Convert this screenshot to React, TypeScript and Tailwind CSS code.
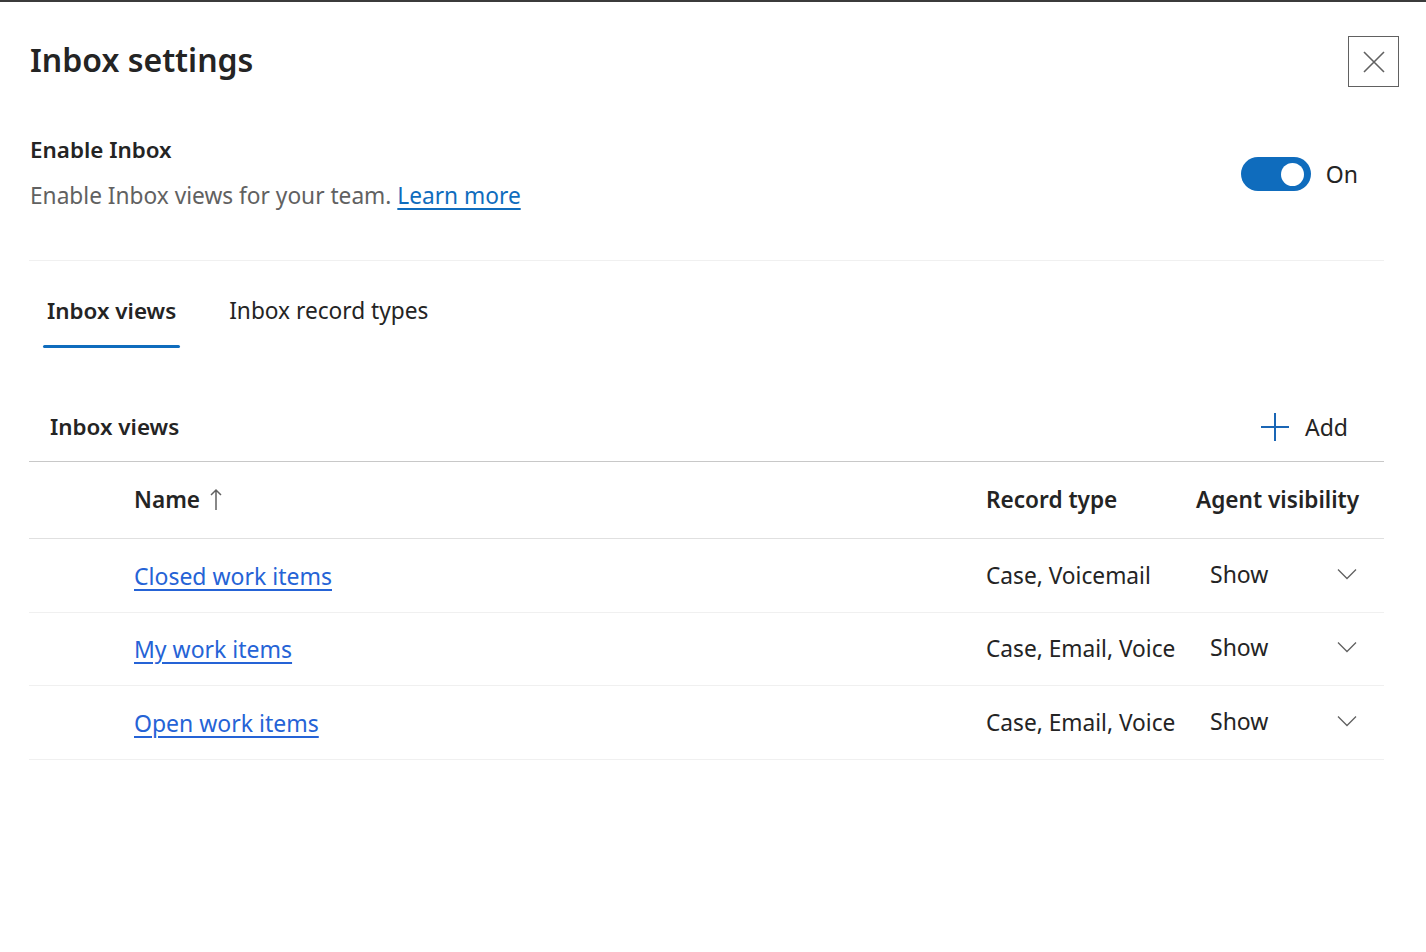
import React from "react";

const font = { fontFamily: '"Segoe UI", "Noto Sans", "Open Sans", sans-serif' };

function Chevron() {
  return (
    <svg width="20" height="12" viewBox="0 0 20 12" fill="none">
      <path d="M1 1.5 L10 10.5 L19 1.5" stroke="#616161" strokeWidth="1.3" />
    </svg>
  );
}

const rows = [
  { name: "Closed work items", type: "Case, Voicemail", h: "h-[74px]" },
  { name: "My work items", type: "Case, Email, Voice", h: "h-[73px]" },
  { name: "Open work items", type: "Case, Email, Voice", h: "h-[74px]" },
];

export default function App() {
  return (
    <div
      className="w-[1426px] h-[952px] bg-white border-t-2 border-[#3b3b3b] text-[#242424] overflow-hidden"
      style={font}
    >
      <div className="pl-[29px] pr-[42px]">
        {/* Header */}
        <div className="flex justify-between items-start pt-[34px] mr-[-15px]">
          <h1 className="text-[32px] leading-[40px] font-semibold mt-[4px] ml-[1px]">Inbox settings</h1>
          <button className="w-[51px] h-[51px] border border-[#616161] flex items-center justify-center">
            <svg width="22" height="22" viewBox="0 0 22 22" fill="none">
              <path d="M1 1 L21 21 M21 1 L1 21" stroke="#616161" strokeWidth="1.6" />
            </svg>
          </button>
        </div>

        {/* Enable section */}
        <div className="flex items-center justify-between mt-[47px] pr-[26px]">
          <div className="ml-[1px]">
            <div className="text-[22.4px] leading-[32px] font-semibold">Enable Inbox</div>
            <div className="text-[22.7px] leading-[32px] mt-[14px] text-[#616161]">
              Enable Inbox views for your team.{" "}
              <a href="#" className="text-[#0f6cbd] underline underline-offset-[4px]">
                Learn more
              </a>
            </div>
          </div>
          <div className="flex items-center gap-[15px] mt-[2px]">
            <div className="w-[70px] h-[34px] rounded-full bg-[#0f6cbd] flex items-center justify-end pr-[7px]">
              <div className="w-[23px] h-[23px] rounded-full bg-white" />
            </div>
            <span className="text-[23px] leading-[32px]">On</span>
          </div>
        </div>

        <div className="mt-[48px] h-px bg-[#f0f0f0]" />

        {/* Tabs */}
        <div className="flex pt-[34px] pl-[14px] gap-[45px]">
          <div className="flex flex-col">
            <span className="px-[4px] text-[22.4px] leading-[32px] font-semibold">Inbox views</span>
            <div className="mt-[18px] h-[3px] bg-[#0f6cbd] rounded-sm" />
          </div>
          <div className="flex flex-col">
            <span className="px-[4px] text-[22.7px] leading-[32px]">Inbox record types</span>
          </div>
        </div>

        {/* Section header */}
        <div className="mt-[44px] h-[70px] flex items-center justify-between pl-[21px] pr-[36px] border-b border-[#c8c8c8]">
          <span className="text-[22.4px] leading-[32px] font-semibold">Inbox views</span>
          <div className="flex items-center gap-[15px]">
            <svg width="30" height="30" viewBox="0 0 30 30" fill="none">
              <path d="M15 1 V29 M1 15 H29" stroke="#1a66b5" strokeWidth="2" />
            </svg>
            <span className="text-[23px] leading-[32px]">Add</span>
          </div>
        </div>

        {/* Table header */}
        <div className="h-[77px] flex items-center pl-[105px] border-b border-[#e0e0e0]">
          <div className="w-[852px] flex items-center gap-[10px]">
            <span className="text-[22.6px] leading-[32px] font-semibold">Name</span>
            <svg width="12" height="24" viewBox="0 0 12 24" fill="none">
              <path d="M6 2 V22 M1 7 L6 2 L11 7" stroke="#616161" strokeWidth="1.5" />
            </svg>
          </div>
          <div className="w-[210px] text-[22.6px] leading-[32px] font-semibold">Record type</div>
          <div className="flex-1 text-[22.6px] leading-[32px] font-semibold whitespace-nowrap">Agent visibility</div>
        </div>

        {/* Rows */}
        {rows.map((r) => (
          <div key={r.name} className={`${r.h} flex items-center pl-[105px] border-b border-[#f0f0f0]`}>
            <div className="w-[852px]">
              <a href="#" className="text-[23px] leading-[32px] text-[#2563d6] underline underline-offset-[4px]">
                {r.name}
              </a>
            </div>
            <div className="w-[200px] mr-[10px] text-[22.7px] leading-[32px] whitespace-nowrap">{r.type}</div>
            <div className="flex-1 flex items-center justify-between pl-[14px] pr-[27px] mt-[-4px]">
              <span className="text-[23px] leading-[32px]">Show</span>
              <Chevron />
            </div>
          </div>
        ))}
      </div>
    </div>
  );
}
